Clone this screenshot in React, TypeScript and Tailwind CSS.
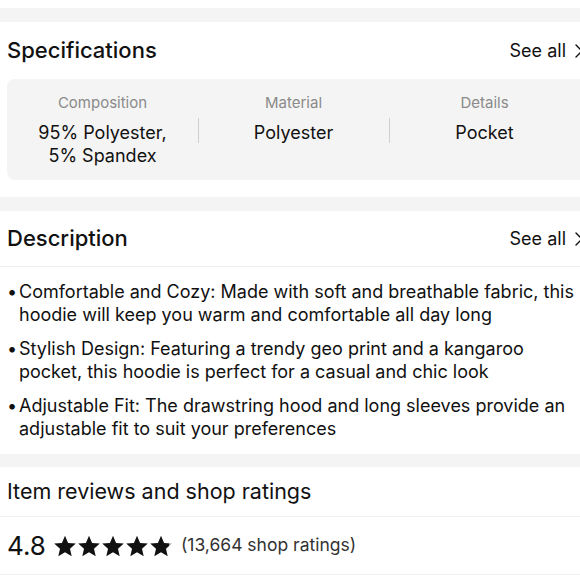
import { ChevronRight } from 'lucide-react';

const SPECS = [
  { label: 'Composition', value: ['95% Polyester,', '5% Spandex'] },
  { label: 'Material', value: ['Polyester'] },
  { label: 'Details', value: ['Pocket'] },
];

const BULLETS = [
  ['Comfortable and Cozy: Made with soft and breathable fabric, this', 'hoodie will keep you warm and comfortable all day long'],
  ['Stylish Design: Featuring a trendy geo print and a kangaroo', 'pocket, this hoodie is perfect for a casual and chic look'],
  ['Adjustable Fit: The drawstring hood and long sleeves provide an', 'adjustable fit to suit your preferences'],
];

function SeeAll() {
  return (
    <div className="flex items-center gap-[1px] text-[18px] text-[#111]">
      <span>See all</span>
      <ChevronRight size={24} strokeWidth={1.4} />
    </div>
  );
}

function Star({ id, fill = 1 }: { id: string; fill?: number }) {
  return (
    <svg width="24" height="24" viewBox="0 0 24 24">
      <defs>
        <linearGradient id={id} x1="0" x2="1" y1="0" y2="0">
          <stop offset={`${fill * 100}%`} stopColor="#111" />
          <stop offset={`${fill * 100}%`} stopColor="#9a9a9a" />
        </linearGradient>
      </defs>
      <path
        d="M12 1.8l3.1 7.1 7.7.7-5.8 5.1 1.7 7.5L12 18.3l-6.7 3.9 1.7-7.5L1.2 9.6l7.7-.7z"
        fill={`url(#${id})`}
      />
    </svg>
  );
}

export default function App() {
  return (
    <div className="w-[580px] h-[580px] overflow-hidden bg-[#f4f4f4] font-['Inter',sans-serif] text-[#111]">
      <div className="w-[598px]">
        <div className="h-[8px] bg-white" />

        <section className="mt-[14px] bg-white px-[7px] pb-[17px]">
          <div className="flex h-[57px] items-center justify-between">
            <h2 className="text-[22px] font-medium">Specifications</h2>
            <SeeAll />
          </div>
          <div className="flex h-[101px] rounded-[8px] bg-[#f4f4f4] pt-[14px]">
            {SPECS.map((spec, i) => (
              <div key={spec.label} className="relative flex w-[191px] flex-col items-center">
                {i > 0 && <div className="absolute left-0 top-[25px] h-[25px] w-px bg-[#cfcfcf]" />}
                <span className="text-[15px] leading-[20px] text-[#8a8a8a]">{spec.label}</span>
                <div className="mt-[8px] text-center text-[18px] leading-[23px]">
                  {spec.value.map((v) => (
                    <div key={v}>{v}</div>
                  ))}
                </div>
              </div>
            ))}
          </div>
        </section>

        <section className="mt-[14px] bg-white pb-[14px]">
          <div className="flex h-[56px] items-center justify-between border-b border-[#efefef] px-[7px]">
            <h2 className="text-[22px] font-medium">Description</h2>
            <SeeAll />
          </div>
          <ul className="space-y-[11px] px-[7px] pt-[13px] text-[18px] leading-[23px]">
            {BULLETS.map((b) => (
              <li key={b[0]} className="flex">
                <span className="w-[12px] shrink-0">•</span>
                <span>
                  {b[0]}
                  <br />
                  {b[1]}
                </span>
              </li>
            ))}
          </ul>
        </section>

        <section className="mt-[13px] bg-white">
          <div className="flex h-[50px] items-center border-b border-[#efefef] px-[7px]">
            <h2 className="text-[21.5px]">Item reviews and shop ratings</h2>
          </div>
          <div className="flex h-[58px] items-center gap-[7px] border-b border-[#efefef] px-[7px]">
            <span className="text-[26px] leading-none">4.8</span>
            <div className="flex">
              <Star id="s1" />
              <Star id="s2" />
              <Star id="s3" />
              <Star id="s4" />
              <Star id="s5" fill={0.88} />
            </div>
            <span className="ml-[1px] text-[17.5px] text-[#333]">(13,664 shop ratings)</span>
          </div>
          <div className="h-[20px]" />
        </section>
      </div>
    </div>
  );
}
